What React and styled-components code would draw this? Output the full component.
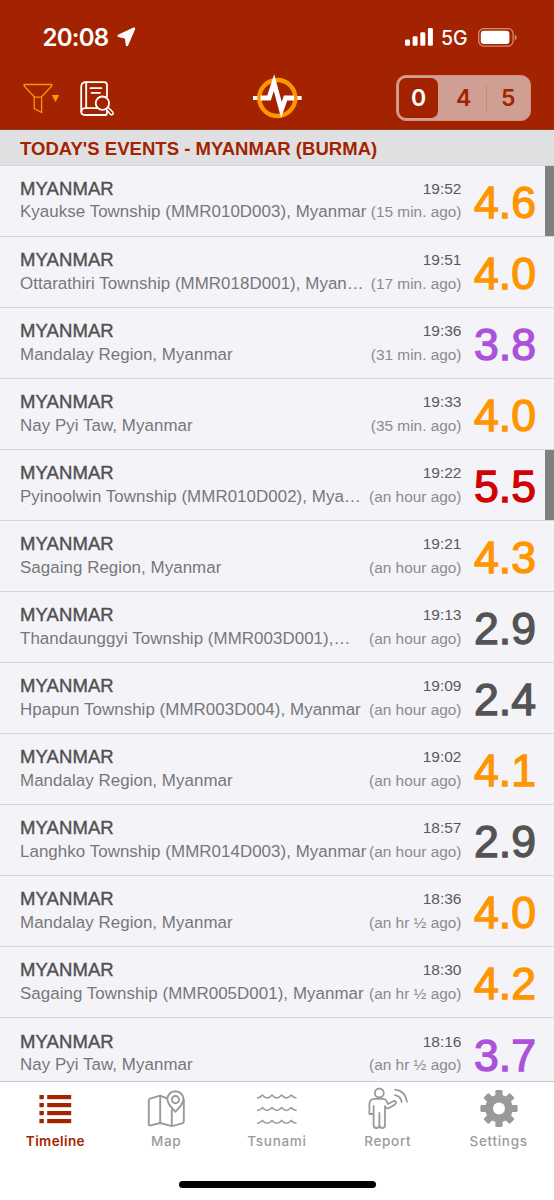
import React from "react";
import styled, { createGlobalStyle } from "styled-components";

const colors = {
  brand: "#a32300",
  orange: "#ff9500",
  purple: "#ab51da",
  red: "#d00005",
  dark: "#535355",
  muted: "#9a9a9a",
};

const events = [
  { place: "Kyaukse Township (MMR010D003), Myanmar", time: "19:52", ago: "(15 min. ago)", mag: "4.6", color: colors.orange, felt: true },
  { place: "Ottarathiri Township (MMR018D001), Myan…", time: "19:51", ago: "(17 min. ago)", mag: "4.0", color: colors.orange },
  { place: "Mandalay Region, Myanmar", time: "19:36", ago: "(31 min. ago)", mag: "3.8", color: colors.purple },
  { place: "Nay Pyi Taw, Myanmar", time: "19:33", ago: "(35 min. ago)", mag: "4.0", color: colors.orange },
  { place: "Pyinoolwin Township (MMR010D002), Mya…", time: "19:22", ago: "(an hour ago)", mag: "5.5", color: colors.red, felt: true },
  { place: "Sagaing Region, Myanmar", time: "19:21", ago: "(an hour ago)", mag: "4.3", color: colors.orange },
  { place: "Thandaunggyi Township (MMR003D001),…", time: "19:13", ago: "(an hour ago)", mag: "2.9", color: colors.dark },
  { place: "Hpapun Township (MMR003D004), Myanmar", time: "19:09", ago: "(an hour ago)", mag: "2.4", color: colors.dark },
  { place: "Mandalay Region, Myanmar", time: "19:02", ago: "(an hour ago)", mag: "4.1", color: colors.orange },
  { place: "Langhko Township (MMR014D003), Myanmar", time: "18:57", ago: "(an hour ago)", mag: "2.9", color: colors.dark },
  { place: "Mandalay Region, Myanmar", time: "18:36", ago: "(an hr ½ ago)", mag: "4.0", color: colors.orange },
  { place: "Sagaing Township (MMR005D001), Myanmar", time: "18:30", ago: "(an hr ½ ago)", mag: "4.2", color: colors.orange },
  { place: "Nay Pyi Taw, Myanmar", time: "18:16", ago: "(an hr ½ ago)", mag: "3.7", color: colors.purple },
];

const LocationIcon = () => (
  <svg width="20" height="20" viewBox="0 0 20 20">
    <path
      d="M17 1.7 L1.6 8.8 L9 10.6 L10 18 Z"
      fill="#fff"
      stroke="#fff"
      strokeWidth="2.4"
      strokeLinejoin="round"
    />
  </svg>
);

const SignalIcon = () => (
  <svg width="28" height="18" viewBox="0 0 28 18" fill="#fff">
    <rect x="0" y="11.5" width="5" height="6.3" rx="1.4" />
    <rect x="7.6" y="8.3" width="5" height="9.5" rx="1.4" />
    <rect x="15.3" y="4.3" width="5" height="13.5" rx="1.4" />
    <rect x="22.9" y="0" width="5" height="17.8" rx="1.4" />
  </svg>
);

const BatteryIcon = () => (
  <svg width="39" height="19" viewBox="0 0 39 19">
    <rect x="0.7" y="0.7" width="34.4" height="17.4" rx="5" fill="none" stroke="#d98a75" strokeWidth="1.3" />
    <rect x="2.8" y="2.8" width="28.6" height="13.2" rx="3" fill="#fff" />
    <path d="M36.8 6.6 Q38.8 7.6 38.8 9.5 T36.8 12.4Z" fill="#d98a75" />
  </svg>
);

const FilterIcon = () => (
  <svg width="38" height="32" viewBox="0 0 38 32">
    <path
      d="M1.2 1.5 H28.8 V3 L18.6 13.8 V29.5 L11.2 25.6 V13.8 L1.2 3 Z M11.2 14.2 H18.6"
      fill="none"
      stroke={colors.orange}
      strokeWidth="1.3"
    />
    <path d="M28.8 12 H36.2 L32.5 19.2 Z" fill={colors.orange} />
  </svg>
);

const CatalogIcon = () => (
  <svg width="36" height="36" viewBox="0 0 36 36" fill="none" stroke="#fff" strokeWidth="1.8" strokeLinecap="round" strokeLinejoin="round">
    <path d="M27 15.5 V4 Q27 1.2 24.2 1.2 H6 Q1.2 1.2 1.2 6 V30.5 Q1.2 34 5 34 H25.2 Q27 34 27 32 V29.6" />
    <path d="M1.4 30.5 Q1.6 27.2 5.4 27.2 H17.4 M6.2 1.4 V27" />
    <path d="M10.4 7.2 H21.4 M11.6 11.8 H20" />
    <circle cx="22.4" cy="22.2" r="6.7" />
    <path d="M26.3 28.2 L28.3 26.4 L32.8 31.1 Q33.7 32.4 32.7 33.4 Q31.5 34.3 30.5 33.4 Z" strokeWidth="1.5" />
  </svg>
);

const LogoIcon = () => (
  <svg width="50" height="48" viewBox="0 0 50 48" fill="none">
    <path d="M1 26 H49.6" stroke="#fff" strokeWidth="4.2" />
    <circle cx="25.3" cy="26" r="16" fill={colors.brand} />
    <circle cx="25.3" cy="26" r="18" stroke={colors.orange} strokeWidth="4.4" />
    <path d="M8.6 26 H17 L22 10.6 L29.4 38 L33.6 26 H42" stroke="#fff" strokeWidth="4.8" strokeMiterlimit="10" />
  </svg>
);

const TimelineIcon = () => (
  <svg width="40" height="44" viewBox="0 0 40 44" fill={colors.brand}>
    {[9, 17, 25, 33].map((y) => (
      <React.Fragment key={y}>
        <rect x="4.4" y={y} width="4.4" height="4.2" />
        <rect x="12.2" y={y} width="24" height="4.2" />
      </React.Fragment>
    ))}
  </svg>
);

const MapIcon = () => (
  <svg width="40" height="44" viewBox="0 0 40 44" fill="none" stroke={colors.muted} strokeWidth="1.9" strokeLinejoin="round">
    <path d="M21.5 12.6 L14.2 9.6 L4 12.7 Q2.8 13.1 2.8 14.4 V38 Q2.8 39.9 4.8 39.4 L14.2 37 L25.8 40.2 L36.2 37.4 Q37.8 37 37.8 35.4 V13" />
    <path d="M14.2 9.6 V37 M25.8 23 V40" />
    <path d="M29.4 25.8 C26 21.5 21.4 18.5 21.4 13.2 A8 8 0 0 1 37.4 13.2 C37.4 18.5 32.8 21.5 29.4 25.8 Z" fill="#fff" />
    <circle cx="29.4" cy="13.6" r="3.6" />
  </svg>
);

const TsunamiIcon = () => (
  <svg width="42" height="44" viewBox="0 0 42 44" fill="none" stroke={colors.muted} strokeWidth="1.6" strokeLinecap="round" strokeLinejoin="round">
    {[11.8, 24.4, 37.2].map((y) => (
      <path
        key={y}
        d={`M1.6 ${y} Q4.4 ${y} 6.4 ${y - 2.8} Q11.2 ${y + 3} 16 ${y - 2.8} Q20.8 ${y + 3} 25.6 ${y - 2.8} Q30.4 ${y + 3} 35.2 ${y - 2.8} Q37.4 ${y} 40 ${y}`}
      />
    ))}
  </svg>
);

const ReportIcon = () => (
  <svg width="42" height="44" viewBox="0 0 42 44" fill="none" stroke={colors.muted} strokeWidth="1.8" strokeLinecap="round" strokeLinejoin="round">
    <circle cx="12.3" cy="7" r="4.5" />
    <path d="M6.6 20 V28 H2.4 V18 Q2.4 12.8 8 12.8 H16.5 Q18.6 12.8 19.6 15 L21 18 L26.2 15.2 Q28.6 14.4 29 16.2 Q29.2 17.6 27.8 18.6 L21.4 22.2 Q19.6 22.8 18.6 21 L18 20 V39 Q18 42 15.2 42 Q12.4 42 12.4 39 V27 V39 Q12.4 42 9.5 42 Q6.6 42 6.6 39 V27" />
    <path d="M28.2 3.6 Q38.5 5 40 15.6 M28 9.2 Q33.8 10.2 34.6 16" />
  </svg>
);

const SettingsIcon = () => (
  <svg width="40" height="44" viewBox="0 0 40 44" fill={colors.muted}>
    <g transform="translate(20 22.5)">
      {[0, 45, 90, 135].map((deg) => (
        <rect key={deg} x="-3.6" y="-18.6" width="7.2" height="37.2" rx="1.4" transform={`rotate(${deg})`} />
      ))}
      <circle r="13.8" />
      <circle r="6" fill="#fff" />
    </g>
  </svg>
);

const tabs = [
  { label: "Timeline", icon: <TimelineIcon />, active: true },
  { label: "Map", icon: <MapIcon /> },
  { label: "Tsunami", icon: <TsunamiIcon /> },
  { label: "Report", icon: <ReportIcon /> },
  { label: "Settings", icon: <SettingsIcon /> },
];

const App = () => {
  return (
    <>
      <GlobalStyle />
      <Screen>
        <Header>
          <StatusBar>
            <Clock>20:08</Clock>
            <LocationIcon />
            <StatusRight>
              <SignalIcon />
              <Network>5G</Network>
              <BatteryIcon />
            </StatusRight>
          </StatusBar>

          <Toolbar>
            <ToolbarLeft>
              <FilterIcon />
              <CatalogIcon />
            </ToolbarLeft>
            <LogoIcon />
            <ToolbarRight>
              <Segmented>
                <Segment $active>0</Segment>
                <Segment>4</Segment>
                <Separator />
                <Segment>5</Segment>
              </Segmented>
            </ToolbarRight>
          </Toolbar>
        </Header>

        <SectionTitle>
          <span>TODAY'S EVENTS - MYANMAR (BURMA)</span>
        </SectionTitle>

        <List>
          {events.map((event) => (
            <Row key={event.time} $felt={event.felt}>
              <Details>
                <Line>
                  <Country>MYANMAR</Country>
                  <Time>{event.time}</Time>
                </Line>
                <Line>
                  <Place>{event.place}</Place>
                  <Ago>{event.ago}</Ago>
                </Line>
              </Details>
              <Magnitude $color={event.color}>{event.mag}</Magnitude>
            </Row>
          ))}
        </List>

        <TabBar>
          {tabs.map((tab) => (
            <Tab key={tab.label} $active={tab.active}>
              {tab.icon}
              <TabLabel>{tab.label}</TabLabel>
            </Tab>
          ))}
        </TabBar>
        <HomeArea>
          <HomeIndicator />
        </HomeArea>
      </Screen>
    </>
  );
};

const GlobalStyle = createGlobalStyle`
  * {
    box-sizing: border-box;
  }

  body {
    margin: 0;
    font-family: "Liberation Sans", Arial, sans-serif;
  }

  svg {
    display: block;
    flex-shrink: 0;
  }
`;

const Screen = styled.main`
  display: flex;
  flex-direction: column;
  width: 554px;
  height: 1200px;
  overflow: hidden;
  background: #f4f3f8;
`;

const Header = styled.header`
  height: 130px;
  flex-shrink: 0;
  background: ${colors.brand};
  border-bottom: 1px solid #8c3b25;
  color: #fff;
  font-family: Inter, sans-serif;
`;

const StatusBar = styled.div`
  display: flex;
  align-items: center;
  height: 67px;
  padding: 7px 37px 0 42.5px;

  > svg {
    margin-left: 8px;
  }
`;

const Clock = styled.span`
  width: 66px;
  font-size: 24px;
  font-weight: 600;
  letter-spacing: -0.75px;
  white-space: nowrap;
`;

const StatusRight = styled.div`
  display: flex;
  align-items: center;
  margin-left: auto;
`;

const Network = styled.span`
  width: 27px;
  margin: 1px 10px 0 8px;
  font-size: 19.5px;
  font-weight: 500;
`;

const Toolbar = styled.div`
  display: grid;
  grid-template-columns: 1fr 50px 1fr;
  align-items: center;
  height: 62px;
  padding: 0 23px;

  > svg {
    margin-top: -4px;
  }
`;

const ToolbarLeft = styled.div`
  display: flex;
  align-items: center;
  gap: 18.8px;
  padding: 1px 0 0 0.4px;
`;

const ToolbarRight = styled.div`
  display: flex;
  justify-content: flex-end;
`;

const Segmented = styled.div`
  display: flex;
  align-items: center;
  width: 135px;
  height: 46px;
  padding: 2px 0 2px 1px;
  background: #cf9f93;
  border: 1px solid #d98d7b;
  border-radius: 10px;
`;

const Segment = styled.span`
  display: flex;
  align-items: center;
  justify-content: center;
  flex: ${({ $active }) => ($active ? "0 0 39px" : "1")};
  height: 40px;
  margin-right: ${({ $active }) => ($active ? "4px" : "0")};
  margin-left: ${({ $active }) => ($active ? "1px" : "0")};
  border-radius: 7px;
  background: ${({ $active }) => ($active ? colors.brand : "transparent")};
  color: ${({ $active }) => ($active ? "#fff" : colors.brand)};
  font-size: 23px;
  font-weight: 600;
`;

const Separator = styled.span`
  width: 1px;
  height: 27px;
  background: #c5897b;
`;

const SectionTitle = styled.h2`
  display: flex;
  align-items: center;
  height: 35.5px;
  flex-shrink: 0;
  margin: 0;
  padding: 3.5px 20px 0;
  background: #e0e0e2;
  border-bottom: 1px solid #d5d5d8;
  color: ${colors.brand};
  font-size: 18.5px;
  font-weight: 700;
  letter-spacing: 0.03px;
  white-space: nowrap;
`;

const List = styled.div`
  flex: 1;
  min-height: 0;
  overflow: hidden;
`;

const Row = styled.article`
  display: flex;
  align-items: flex-start;
  height: 71.08px;
  padding: 11.1px 0 0 20px;
  border-bottom: 1px solid #d6d5da;
  box-shadow: ${({ $felt }) => ($felt ? "inset -9px 0 0 #808080" : "none")};
`;

const Details = styled.div`
  width: 441.5px;
`;

const Line = styled.div`
  display: flex;
  justify-content: space-between;
  height: 23.9px;
  line-height: 24px;
  white-space: nowrap;
`;

const Country = styled.span`
  color: #505052;
  font-size: 18.5px;
  letter-spacing: 0.08px;
  -webkit-text-stroke: 0.4px #505052;
`;

const Time = styled.span`
  color: #5a5a5d;
  font-size: 15.5px;
`;

const Place = styled.span`
  color: #77777a;
  font-size: 16.9px;
  letter-spacing: 0.06px;
`;

const Ago = styled.span`
  color: #8b8b8f;
  font-size: 15.4px;
`;

const Magnitude = styled.span`
  margin-left: 12.5px;
  color: ${({ $color }) => $color};
  font-size: 44.6px;
  line-height: 52px;
  -webkit-text-stroke: 1.3px ${({ $color }) => $color};
`;

const TabBar = styled.nav`
  display: grid;
  grid-template-columns: repeat(5, 1fr);
  height: 76px;
  flex-shrink: 0;
  padding-top: 4px;
  background: #fff;
  border-top: 1px solid #c9c9cb;
`;

const Tab = styled.a`
  display: flex;
  flex-direction: column;
  align-items: center;
  color: ${({ $active }) => ($active ? colors.brand : "#9b9b9b")};
  font-weight: ${({ $active }) => ($active ? 600 : 500)};
  letter-spacing: ${({ $active }) => ($active ? "0.4px" : "0.7px")};
`;

const TabLabel = styled.span`
  margin-top: 3px;
  font-family: Inter, sans-serif;
  font-size: 13.5px;
  line-height: 17px;
`;

const HomeArea = styled.div`
  display: flex;
  justify-content: center;
  height: 43px;
  flex-shrink: 0;
  padding-top: 24px;
  background: #fff;
`;

const HomeIndicator = styled.div`
  width: 197px;
  height: 7px;
  border-radius: 4px;
  background: #000;
`;

export default App;
